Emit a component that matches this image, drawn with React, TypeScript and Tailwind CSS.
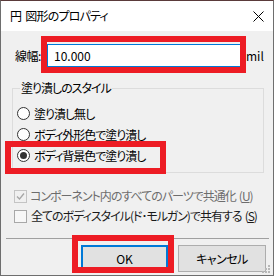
import React from "react";

const font = "[font-family:'Noto_Sans_CJK_JP','Noto_Sans',sans-serif] [font-feature-settings:'palt']";

function Radio({ checked, label }: { checked?: boolean; label: string }) {
  return (
    <div className="flex h-[21px] items-center">
      <div className="flex h-[13px] w-[13px] items-center justify-center rounded-full border border-[#333333] bg-white">
        {checked && <div className="h-[7px] w-[7px] rounded-full bg-[#333333]" />}
      </div>
      <span className="ml-[4px] whitespace-nowrap text-[12px] leading-none tracking-[-1px] text-black">{label}</span>
    </div>
  );
}

export default function App() {
  return (
    <div className={`relative h-[276px] w-[274px] overflow-hidden border border-[#6e6e6e] border-t-[#5a3a3a] bg-[#f0f0f0] ${font}`}>
      {/* Title bar */}
      <div className="flex h-[30px] items-center justify-between bg-white pl-[9px] pr-[9px]">
        <span className="whitespace-nowrap text-[12px] leading-none tracking-[-0.8px] text-black">
          円<span className="ml-[4px]">図形のプロパティ</span>
        </span>
        <svg width="11" height="11" viewBox="0 0 11 11">
          <path d="M0.5 0.5 L10.5 10.5 M10.5 0.5 L0.5 10.5" stroke="#000" strokeWidth="1" />
        </svg>
      </div>

      {/* Body */}
      <div className="flex flex-col">
        {/* Line width row */}
        <div className="mt-[13px] flex h-[23px] items-center pl-[14px]">
          <span className="w-[32px] whitespace-nowrap text-[12px] leading-none tracking-[-0.5px] text-black">線幅:</span>
          <div className="flex h-[23px] w-[194px] items-center border border-[#0078d7] bg-white pl-[6px]">
            <span className="text-[12px] leading-none text-black">10.000</span>
          </div>
          <span className="ml-[5px] text-[12px] leading-none text-black">mil</span>
        </div>

        {/* Group box */}
        <div className="relative ml-[11px] mt-[21px] h-[85px] w-[252px] border border-[#dcdcdc] pl-[4px] pt-[14px]">
          <span className="absolute left-[7px] top-[-9px] whitespace-nowrap bg-[#f0f0f0] px-[1px] text-[12px] leading-[16px] tracking-[-1px] text-black">
            塗り潰しのスタイル
          </span>
          <Radio label="塗り潰し無し" />
          <Radio label="ボディ外形色で塗り潰し" />
          <Radio checked label="ボディ背景色で塗り潰し" />
        </div>

        {/* Checkboxes */}
        <div className="mt-[13px] flex h-[20px] items-center pl-[13px]">
          <div className="flex h-[13px] w-[13px] shrink-0 items-center justify-center border border-[#c4c4c4] bg-[#f0f0f0]">
            <svg width="9" height="9" viewBox="0 0 9 9">
              <path d="M1 4.5 L3.5 7 L8 1.5" fill="none" stroke="#a6a6a6" strokeWidth="1.3" />
            </svg>
          </div>
          <span className="ml-[3px] whitespace-nowrap text-[12px] leading-none tracking-[-1px] text-[#6d6d6d]">
            コンポーネント内のすべてのパーツで共通化<span className="ml-[3px]">(<span className="underline">U</span>)</span>
          </span>
        </div>
        <div className="flex h-[20px] items-center pl-[13px]">
          <div className="h-[13px] w-[13px] shrink-0 border border-[#a8a8a8] bg-[#f7f7f7]" />
          <span className="ml-[4px] whitespace-nowrap text-[12px] leading-none tracking-[-1px] text-[#1a1a1a]">
            全てのボディスタイル(ド･モルガン)で共有する<span className="ml-[3px]">(<span className="underline">S</span>)</span>
          </span>
        </div>

        {/* Separator */}
        <div className="ml-[5px] mr-[4px] mt-[12px] h-px bg-[#a0a0a0]" />

        {/* Buttons */}
        <div className="mt-[6px] flex justify-end gap-[10px] pr-[7px]">
          <div className="flex h-[27px] w-[87px] items-center justify-center border-2 border-[#0078d7] bg-[#e1e1e1] text-[12px] leading-none text-black">
            OK
          </div>
          <div className="flex h-[27px] w-[88px] items-center justify-center border border-[#adadad] bg-[#e1e1e1] text-[12px] leading-none tracking-[-0.5px] text-black">
            キャンセル
          </div>
        </div>
      </div>

      {/* Size grip */}
      <svg className="absolute left-[261px] top-[264px]" width="9" height="9" viewBox="0 0 9 9">
        <rect x="6" y="0" width="2" height="2" fill="#b8b8b8" />
        <rect x="3" y="3" width="2" height="2" fill="#b8b8b8" />
        <rect x="6" y="3" width="2" height="2" fill="#b8b8b8" />
        <rect x="0" y="6" width="2" height="2" fill="#b8b8b8" />
        <rect x="3" y="6" width="2" height="2" fill="#b8b8b8" />
        <rect x="6" y="6" width="2" height="2" fill="#b8b8b8" />
      </svg>

      {/* Red annotation boxes */}
      <div className="pointer-events-none absolute left-[40px] top-[35px] h-[37px] w-[205px] border-[6px] border-[#ed1c24]" />
      <div className="pointer-events-none absolute left-[4px] top-[140px] h-[33px] w-[161px] border-[6px] border-[#ed1c24]" />
      <div className="pointer-events-none absolute left-[71px] top-[234px] h-[38px] w-[102px] border-[6px] border-[#ed1c24]" />
    </div>
  );
}
